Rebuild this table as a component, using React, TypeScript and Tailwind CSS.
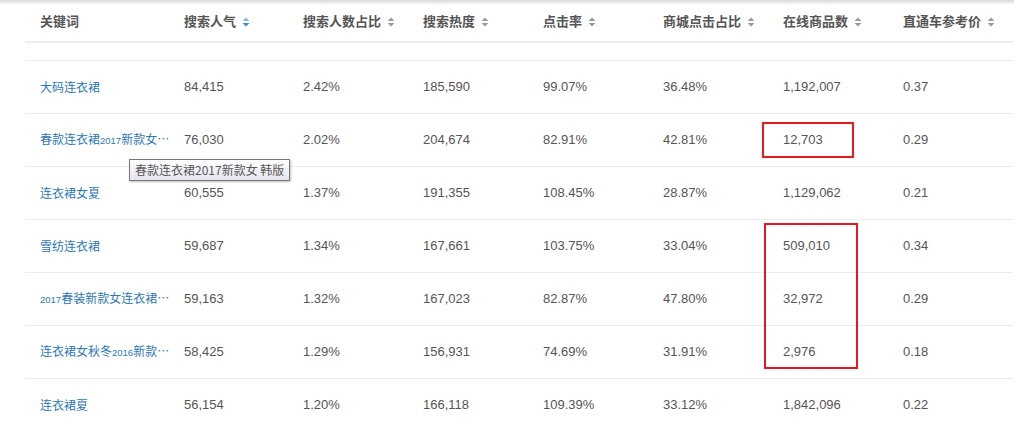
const headers = ['关键词', '搜索人气', '搜索人数占比', '搜索热度', '点击率', '商城点击占比', '在线商品数', '直通车参考价'];

const rows: string[][] = [
  ['大码连衣裙', '84,415', '2.42%', '185,590', '99.07%', '36.48%', '1,192,007', '0.37'],
  ['春款连衣裙2017新款女 韩版', '76,030', '2.02%', '204,674', '82.91%', '42.81%', '12,703', '0.29'],
  ['连衣裙女夏', '60,555', '1.37%', '191,355', '108.45%', '28.87%', '1,129,062', '0.21'],
  ['雪纺连衣裙', '59,687', '1.34%', '167,661', '103.75%', '33.04%', '509,010', '0.34'],
  ['2017春装新款女连衣裙韩版', '59,163', '1.32%', '167,023', '82.87%', '47.80%', '32,972', '0.29'],
  ['连衣裙女秋冬2016新款韩版', '58,425', '1.29%', '156,931', '74.69%', '31.91%', '2,976', '0.18'],
  ['连衣裙夏', '56,154', '1.20%', '166,118', '109.39%', '33.12%', '1,842,096', '0.22'],
];

// digits in the keyword font render narrow and short, so split them out
function Keyword({ text }: { text: string }) {
  const parts = text.split(/(\d+)/).filter(Boolean);
  return (
    <>
      {parts.map((p, i) =>
        /^\d+$/.test(p) ? (
          <span key={i} className="text-[9.5px] font-['Liberation_Sans',sans-serif]">
            {p}
          </span>
        ) : (
          <span key={i}>{p}</span>
        ),
      )}
    </>
  );
}

function SortIcon({ active }: { active?: boolean }) {
  return (
    <svg width="8" height="10" viewBox="0 0 8 10" className="ml-[6px] inline-block align-[-1px]">
      <path d="M0.5 4L4 0.5L7.5 4Z" fill={active ? '#9fb3c8' : '#9a9a9a'} />
      <path d="M0.5 6L4 9.5L7.5 6Z" fill={active ? '#3a8ed6' : '#9a9a9a'} />
    </svg>
  );
}

export default function App() {
  return (
    <div className="relative h-[430px] w-[1036px] overflow-hidden bg-white font-['Liberation_Sans','Noto_Sans_CJK_SC',sans-serif]">
      {/* shadow of the fixed header above */}
      <div className="absolute left-0 top-0 h-[5px] w-[1014px] bg-gradient-to-b from-[#d9d9d9] to-transparent" />

      <table className="ml-[25px] w-[988px] table-fixed border-collapse">
        <colgroup>
          <col className="w-[145px]" />
          <col className="w-[119px]" />
          <col className="w-[120px]" />
          <col className="w-[120px]" />
          <col className="w-[120px]" />
          <col className="w-[120px]" />
          <col className="w-[120px]" />
          <col className="w-[124px]" />
        </colgroup>
        <thead>
          <tr className="h-[42px] border-b-2 border-[#eeeeee]">
            {headers.map((h, i) => (
              <th
                key={h}
                className={`text-left align-middle text-[13px] font-bold text-[#555] font-['Noto_Sans_CJK_SC',sans-serif] ${i === 0 ? 'pl-[15px]' : 'pl-[14px]'}`}
              >
                {h}
                {i > 0 && <SortIcon active={i === 1} />}
              </th>
            ))}
          </tr>
        </thead>
        <tbody>
          <tr className="h-[18px] border-b border-[#ececec]">
            <td colSpan={8} />
          </tr>
          {rows.map((r) => (
            <tr key={r[0]} className="h-[53px] border-b border-[#ececec]">
              {r.map((c, i) =>
                i === 0 ? (
                  <td key={i} className="pl-[15px]">
                    <div className="truncate text-[12px] text-[#2e78b2] font-['Noto_Sans_CJK_SC',sans-serif]">
                      <Keyword text={c} />
                    </div>
                  </td>
                ) : (
                  <td key={i} className="pl-[14px] text-[13px] text-[#555]">
                    {c}
                  </td>
                ),
              )}
            </tr>
          ))}
        </tbody>
      </table>

      {/* hover tooltip */}
      <div className="absolute left-[129px] top-[159px] flex h-[22px] items-center border border-[#767676] bg-gradient-to-b from-white to-[#e4e5f0] px-[5px] text-[12px] text-[#575757] shadow-[1px_1px_2px_rgba(0,0,0,0.25)] font-['Noto_Sans_CJK_SC',sans-serif]">
        春款连衣裙2017新款女 韩版
      </div>

      {/* annotation boxes */}
      <div className="absolute left-[762px] top-[122px] h-[36px] w-[92px] border-2 border-[#e3191f]" />
      <div className="absolute left-[764px] top-[223px] h-[146px] w-[94px] border-2 border-[#e3191f]" />
    </div>
  );
}
